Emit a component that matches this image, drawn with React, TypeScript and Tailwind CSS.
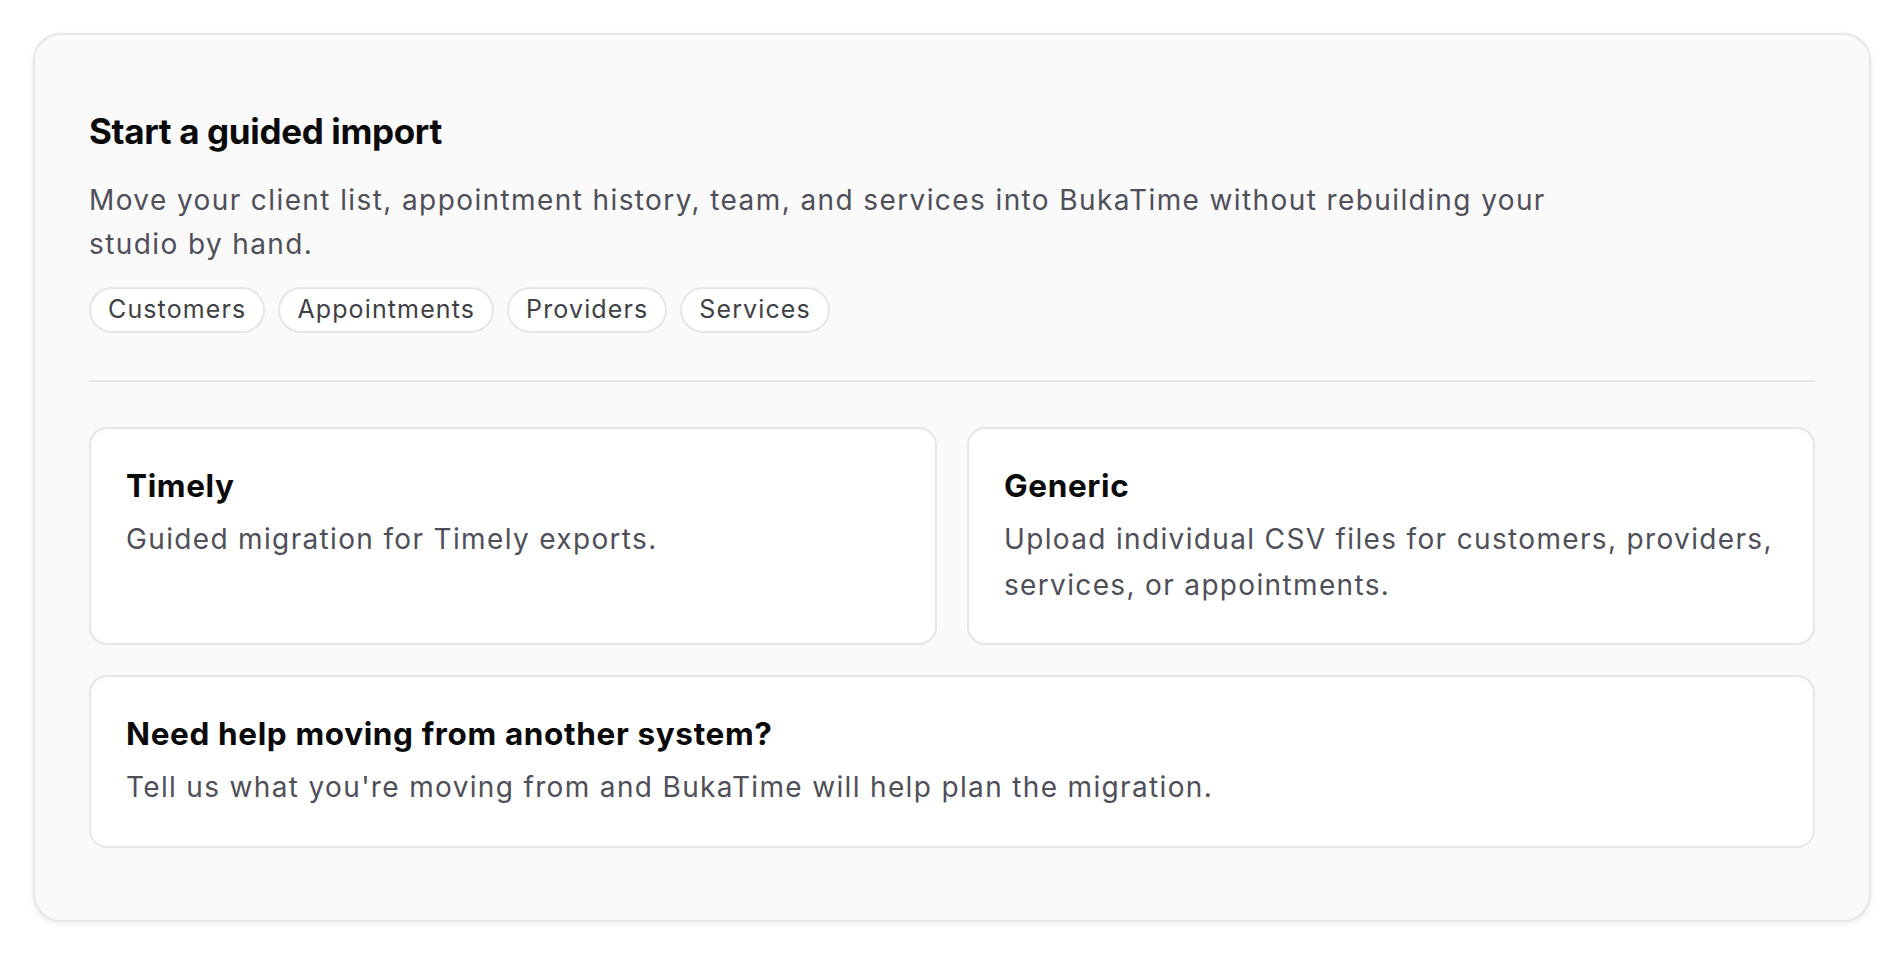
const chips = ["Customers", "Appointments", "Providers", "Services"];

function OptionCard({ title, body }: { title: string; body: string }) {
  return (
    <div className="rounded-[18px] border-2 border-[#e6e6e8] bg-white p-[35px]">
      <h3 className="text-[31.5px] font-bold leading-[44px] tracking-[0.02em] text-[#0a0a0a]">{title}</h3>
      <p className="mt-[9px] text-[28px] leading-[45.5px] tracking-[0.048em] text-[#4f4f59]">{body}</p>
    </div>
  );
}

export default function App() {
  return (
    <div className="min-h-screen bg-white p-[33px] font-['Inter','Noto_Sans',sans-serif]">
      <section className="rounded-[28px] border-2 border-[#e6e6e8] bg-[#fafafa] px-[54px] pb-[72px] pt-[74px] shadow-[0_2px_6px_rgba(0,0,0,0.08)]">
        <h2 className="text-[35px] font-bold leading-[44px] tracking-[-0.01em] text-[#0a0a0a]">
          Start a guided import
        </h2>
        <p className="mt-[25px] max-w-[1500px] text-[28px] leading-[44px] tracking-[0.05em] text-[#4f4f59]">
          Move your client list, appointment history, team, and services into BukaTime without rebuilding your
          studio by hand.
        </p>
        <div className="mt-[21px] flex flex-wrap gap-[13px]">
          {chips.map((c) => (
            <span
              key={c}
              className="flex h-[46px] items-center rounded-full border-2 border-[#e6e6e8] bg-white px-[17px] text-[25px] tracking-[0.045em] text-[#3f3f46]"
            >
              {c}
            </span>
          ))}
        </div>

        <div className="mt-[47px] h-[2px] bg-[#e6e6e8]" />

        <div className="mt-[45px] grid grid-cols-2 gap-[30px]">
          <OptionCard title="Timely" body="Guided migration for Timely exports." />
          <OptionCard
            title="Generic"
            body="Upload individual CSV files for customers, providers, services, or appointments."
          />
        </div>
        <div className="mt-[30px]">
          <OptionCard
            title="Need help moving from another system?"
            body="Tell us what you're moving from and BukaTime will help plan the migration."
          />
        </div>
      </section>
    </div>
  );
}
